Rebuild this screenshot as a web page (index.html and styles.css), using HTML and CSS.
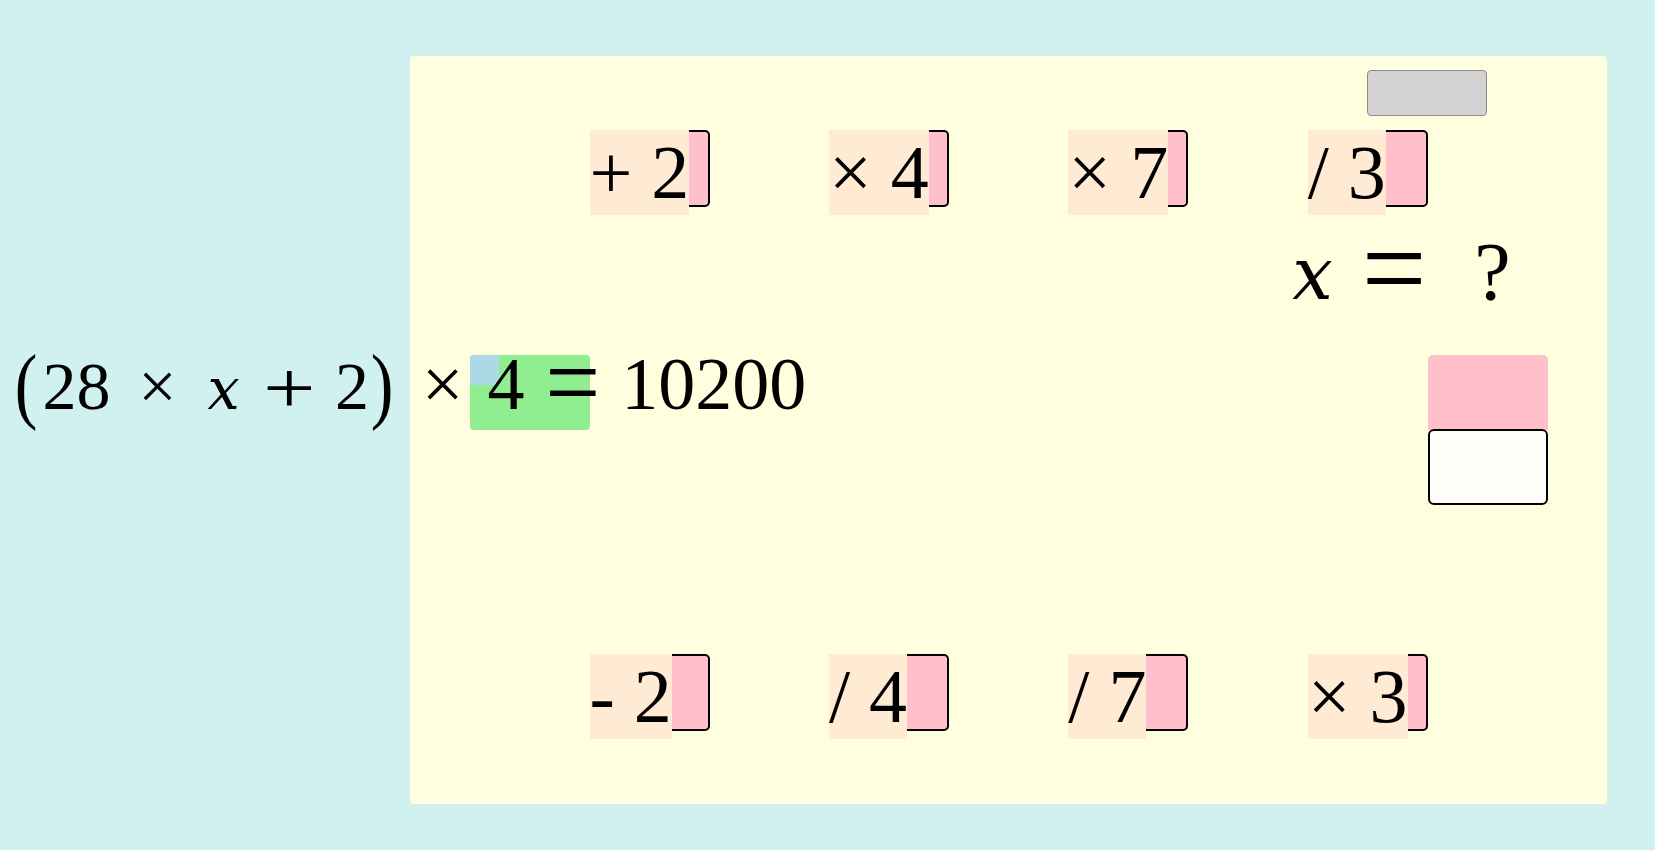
FILE: index.html
```html
<!DOCTYPE html>
<html lang="en">
<head>
<meta charset="utf-8">
<title>Solve for x</title>
<link rel="stylesheet" href="styles.css">
</head>
<body>
<main class="board">
  <div class="toolbar"><button class="reset" type="button" aria-label="reset"></button></div>

  <div class="ops">
    <div class="slot"><span class="tile">+ 2</span></div>
    <div class="slot"><span class="tile">× 4</span></div>
    <div class="slot"><span class="tile">× 7</span></div>
    <div class="slot"><span class="tile">/ 3</span></div>
  </div>

  <div class="middle">
    <div class="drop"><span class="handle"></span></div>
    <div class="answer">
      <div class="xq">
        <span class="xcell w-x"><span class="var var-lg">x</span></span>
        <span class="xcell w-eq"><span class="eq-sign big">=</span></span>
        <span class="xcell w-q">?</span>
      </div>
      <div class="stack">
        <div class="ans-tile"></div>
        <div class="ans-slot"></div>
      </div>
    </div>
  </div>

  <div class="ops">
    <div class="slot"><span class="tile">- 2</span></div>
    <div class="slot"><span class="tile">/ 4</span></div>
    <div class="slot"><span class="tile">/ 7</span></div>
    <div class="slot"><span class="tile">× 3</span></div>
  </div>
</main>

<div class="equation">
  <span class="cell sm m1"><span class="paren">(</span></span>
  <span class="cell sm m2">28</span>
  <span class="cell sm m3">×</span>
  <span class="cell sm m4"><span class="var var-sm">x</span></span>
  <span class="cell sm m5"><span class="plus">+</span></span>
  <span class="cell sm m6">2</span>
  <span class="cell sm m7"><span class="paren">)</span></span>
  <span class="cell lg m8">×</span>
  <span class="cell lg m9">4</span>
  <span class="cell lg m10"><span class="eq-sign">=</span></span>
  <span class="cell lg m11">10200</span>
</div>
</body>
</html>
```

FILE: styles.css
```css
html, body {
  margin: 0;
  padding: 0;
}

body {
  background: #d1f0f0;
  min-height: 100vh;
  overflow: hidden;
  font-family: "Liberation Serif", "Times New Roman", serif;
  color: #000;
}

.board {
  margin: 56px 0 0 410px;
  width: 1197px;
  height: 748px;
  background: #ffffe0;
  border-radius: 4px;
  display: flex;
  flex-direction: column;
}

.toolbar {
  display: flex;
  padding: 14px 0 0 957px;
}

.reset {
  width: 120px;
  height: 46px;
  margin: 0;
  padding: 0;
  background: #d3d3d3;
  border: 1px solid #8c8c8c;
  border-radius: 4px;
}

.ops {
  display: flex;
  gap: 119.4px;
  padding-left: 179.5px;
  margin-top: 14px;
}

.ops + .middle + .ops {
  margin-top: 0;
}

.slot {
  box-sizing: border-box;
  flex: none;
  width: 120px;
  height: 77px;
  background: #ffc0cb;
  border: 2px solid #000;
  border-radius: 5px;
  display: flex;
  align-items: flex-start;
}

.tile {
  flex: none;
  margin: -2px 0 0 -2px;
  background: #ffebd3;
  font-size: 76px;
  line-height: 85px;
  white-space: pre;
}

.middle {
  display: flex;
  align-items: flex-start;
  height: 447px;
}

.drop {
  position: relative;
  flex: none;
  width: 120px;
  height: 75px;
  margin: 148px 0 0 60px;
  background: #90ee90;
  border-radius: 4px;
}

.handle {
  position: absolute;
  top: 0;
  left: 0;
  width: 29px;
  height: 30px;
  background: #add8e6;
  border-radius: 4px 0 0 0;
}

.answer {
  margin-left: 680px;
  display: flex;
  flex-direction: column;
}

.xq {
  display: flex;
  align-items: baseline;
  margin-top: 24px;
  font-size: 82px;
  line-height: 1;
}

.xcell {
  display: flex;
  justify-content: center;
  flex: none;
}

.w-x { width: 85px; }
.w-eq { width: 78px; }
.w-q { width: 119px; }

.var {
  display: inline-block;
  font-family: "DejaVu Serif", "Liberation Serif", serif;
  font-style: italic;
}

.var-sm { font-size: 57px; }
.var-lg { font-size: 72px; }

.eq-sign {
  display: inline-block;
  transform-origin: 50% 0.58em;
  transform: scale(1.32, 1.45);
}

.eq-sign.big {
  transform: scale(1.4, 1.5);
}

.stack {
  margin: 42px 0 0 157.5px;
  display: flex;
  flex-direction: column;
}

.ans-tile {
  width: 120px;
  height: 75px;
  background: #ffc0cb;
  border-radius: 5px 5px 0 0;
}

.ans-slot {
  box-sizing: border-box;
  width: 120px;
  height: 76px;
  margin-top: -1px;
  background: #fffffa;
  border: 2px solid #000;
  border-radius: 6px;
}

/* equation: every token sits in a 30px cell, centred on its glyph */
.equation {
  position: absolute;
  left: 0;
  top: 347px;
  display: flex;
  align-items: baseline;
  line-height: 1;
}

.cell {
  display: flex;
  justify-content: center;
  flex: none;
  width: 30px;
}

.sm { font-size: 68px; }
.lg { font-size: 74px; }

.m1 { margin-left: 11px; }
.m2 { margin-left: 20.5px; }
.m3 { margin-left: 51px; }
.m4 { margin-left: 36px; }
.m5 { margin-left: 35.5px; }
.m6 { margin-left: 33px; }
.m7 { margin-left: 0; }
.m8 { margin-left: 30.5px; }
.m9 { margin-left: 33.5px; }
.m10 { margin-left: 36.5px; }
.m11 { margin-left: 111.2px; }

.paren {
  display: inline-block;
  transform-origin: 50% 0.59em;
  transform: scaleY(1.24);
}

.plus {
  display: inline-block;
  transform-origin: 50% 0.585em;
  transform: translateY(3px) scale(1.37, 1.08);
}
```
